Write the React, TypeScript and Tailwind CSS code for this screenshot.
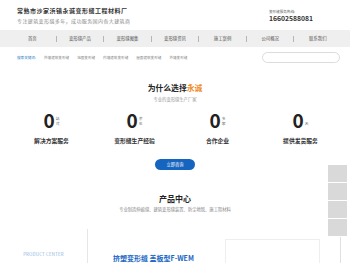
import React from 'react';

const navItems = ['首页', '变形缝产品', '变形缝图集', '变形缝资讯', '施工案例', '公司概况', '联系我们'];
const keywords = ['外墙建筑变形缝', '地面变形缝', '内墙建筑变形缝', '屋面建筑变形缝', '外墙变形缝'];

interface Stat {
  unit: string[];
  label: string;
}

const stats: Stat[] = [
  { unit: ['站', '式'], label: '解决方案服务' },
  { unit: ['余', '年'], label: '变形缝生产经验' },
  { unit: ['多', '家'], label: '合作企业' },
  { unit: ['天'], label: '提供发货服务' },
];

const App: React.FC = () => {
  return (
    <div
      className="relative w-[350px] h-[263px] overflow-hidden bg-white text-[#333]"
      style={{ fontFamily: '"Noto Sans CJK SC", "Noto Sans", sans-serif' }}
    >
      {/* header */}
      <div className="flex h-[30px] items-center justify-between pl-[17px] pr-[37px]">
        <div>
          <div className="text-[6px] font-bold leading-none tracking-[0.5px] text-[#333]">常熟市沙家浜镇永诚变形缝工程材料厂</div>
          <div className="mt-[4px] text-[5px] leading-none tracking-[0.4px] text-[#888]">专注建筑变形缝多年，成功服务国内各大建筑商</div>
        </div>
        <div className="pt-[2px]">
          <div className="text-[3.6px] leading-none text-[#666]">变形缝服务热线:</div>
          <div className="mt-[2px] text-[6.8px] font-bold leading-none text-[#333]">16602588081</div>
        </div>
      </div>

      {/* nav */}
      <div className="flex h-[17px] items-center bg-[#efefef] px-[9px]">
        {navItems.map((item, i) => (
          <React.Fragment key={item}>
            {i > 0 && <div className="h-[6px] w-px bg-[#b5b5b5]" />}
            <div className="flex-1 text-center text-[4.4px] leading-none text-[#555]">{item}</div>
          </React.Fragment>
        ))}
      </div>

      {/* keywords + search */}
      <div className="flex h-[21px] items-center justify-between pl-[17px] pr-[10px]">
        <div className="flex items-center gap-[8px] text-[3.6px] leading-none text-[#888]">
          <span className="text-[#2a7ac4]">搜索关键词:</span>
          {keywords.map((k) => (
            <span key={k}>{k}</span>
          ))}
        </div>
        <div className="h-[11px] w-[78px] rounded-full border border-[#dcdcdc] bg-white" />
      </div>

      {/* why choose */}
      <div className="mt-[16px] text-center text-[7.8px] font-bold leading-none text-[#222]">
        为什么选择<span className="text-[#f08a24]">永诚</span>
      </div>
      <div className="mt-[5px] text-center text-[4.3px] leading-none text-[#999]">专业的变形缝生产厂家</div>

      <div className="mx-[10px] mt-[9px] grid w-[332px] grid-cols-4">
        {stats.map((s) => (
          <div key={s.label} className="flex flex-col items-center">
            <div className="flex items-end">
              <span className="text-[19px] font-bold leading-none text-[#222]">0</span>
              <span className="mb-[3px] ml-[1px] flex flex-col text-[3.8px] leading-[5px] text-[#666]">
                {s.unit.map((u) => (
                  <span key={u}>{u}</span>
                ))}
              </span>
            </div>
            <div className="mt-[9px] text-[5.8px] font-bold leading-none text-[#333]">{s.label}</div>
          </div>
        ))}
      </div>

      <div className="mt-[15px] flex justify-center">
        <div className="flex h-[11px] w-[40px] items-center justify-center rounded-full bg-[#1565c0] text-[4.2px] leading-none text-white">
          立即咨询
        </div>
      </div>

      {/* product center */}
      <div className="mt-[25px] text-center text-[8px] font-bold leading-none text-[#222]">产品中心</div>
      <div className="mt-[4px] text-center text-[4.3px] leading-none text-[#888]">
        专业制造伸缩缝、建筑变形缝装置、防尘地毯、施工程材料
      </div>

      <div className="mt-[18px] flex h-[40px]">
        <div className="flex w-[88px] items-center justify-center border-r border-[#e6e6e6] pt-[11px] text-[4.4px] leading-none tracking-[0.2px] text-[#8ab4e0]">
          PRODUCT CENTER
        </div>
        <div className="relative flex-1">
          <div className="absolute left-[25px] top-[26px] whitespace-nowrap text-[7px] font-bold leading-none text-[#1a66c2]">
            挤塑变形缝 盖板型F-WEM
          </div>
          <div className="absolute left-[137px] top-[10px] h-[40px] w-[95px] border border-[#eeeeee] bg-white" />
        </div>
      </div>

      {/* floating sidebar */}
      <div className="absolute left-[328px] top-[165px] flex w-[19px] flex-col gap-px">
        <div className="h-[17px] bg-[#d9d9d9]" />
        <div className="h-[17px] bg-[#d9d9d9]" />
        <div className="h-[17px] bg-[#d9d9d9]" />
        <div className="h-[17px] bg-[#d9d9d9]" />
        <div className="ml-[12px] h-[30px] w-px bg-[#e0e0e0]" />
      </div>
    </div>
  );
};

export default App;
